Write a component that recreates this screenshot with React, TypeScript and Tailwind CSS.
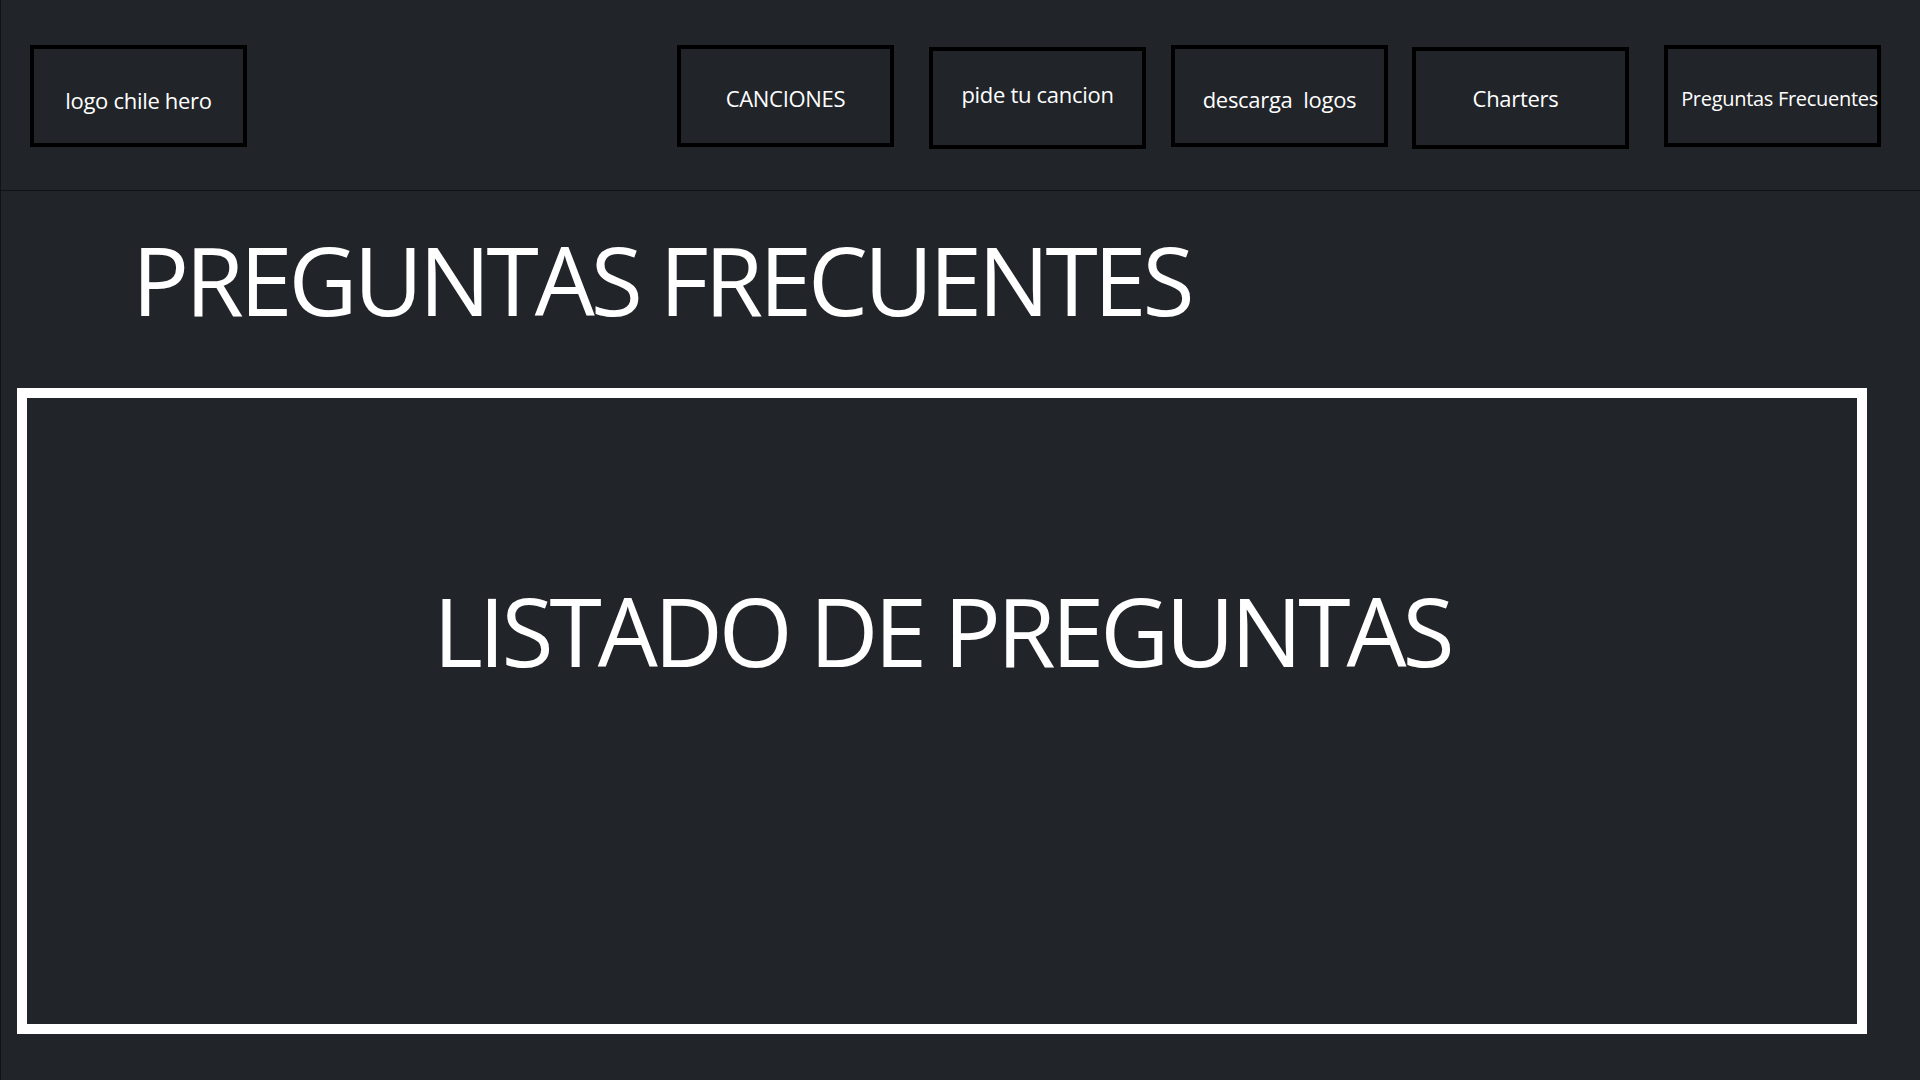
const navItems = [
  { label: "CANCIONES", className: "ml-[430px] pt-[4px] text-[22px]" },
  { label: "pide tu cancion", className: "ml-[35px] mt-[2px] pb-[8px] text-[22px]" },
  { label: "descarga  logos", className: "ml-[25px] pt-[6px] text-[22px]" },
  { label: "Charters", className: "ml-[24px] mt-[2px] pt-[1px] pr-[10px] text-[22px]" },
  { label: "Preguntas Frecuentes", className: "ml-[35px] pt-[5px] pl-[14px] text-[20px] tracking-[-0.2px]" },
];

function NavBox({ label, className }: { label: string; className: string }) {
  return (
    <div
      className={`flex h-[102px] w-[217px] shrink-0 items-center justify-center whitespace-pre border-4 border-black tracking-[-0.3px] text-white ${className}`}
    >
      {label}
    </div>
  );
}

export default function App() {
  return (
    <div
      className="min-h-[1080px] w-[1920px] border-l border-[#111316] bg-[#212429]"
      style={{ fontFamily: '"Open Sans", "Noto Sans", sans-serif' }}
    >
      <header className="flex h-[191px] items-start border-b border-[#101214] pt-[45px]">
        <div className="ml-[29px] flex h-[102px] w-[217px] shrink-0 items-center justify-center border-4 border-black pt-[8px] text-[22px] tracking-[-0.3px] text-white">
          logo chile hero
        </div>
        {navItems.map((item) => (
          <NavBox key={item.label} label={item.label} className={item.className} />
        ))}
      </header>

      <h1 className="ml-[131px] mt-[41px] text-[95px] leading-none tracking-[-4px] text-white">
        PREGUNTAS FRECUENTES
      </h1>

      <section className="ml-[16px] mt-[61px] h-[646px] w-[1850px] border-[10px] border-white pt-[185px]">
        <p className="text-center text-[95px] leading-none tracking-[-4px] text-white">
          LISTADO DE PREGUNTAS
        </p>
      </section>
    </div>
  );
}
